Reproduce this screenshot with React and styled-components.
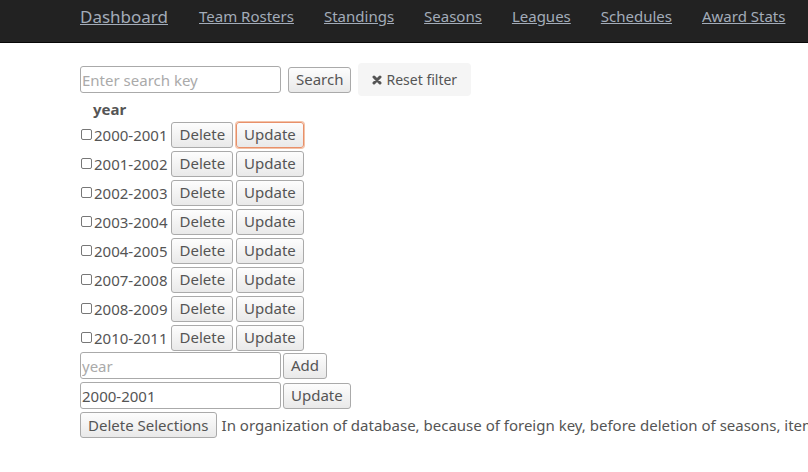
import React from 'react';
import styled, { createGlobalStyle } from 'styled-components';

const GlobalStyle = createGlobalStyle`
  body {
    margin: 0;
    background: #fff;
    font-family: "Noto Sans", "Open Sans", sans-serif;
    color: #555;
    overflow: hidden;
  }
`;

const NavBar = styled.div`
  height: 42px;
  background: #222;
  border-bottom: 1px solid #080808;
  display: flex;
  align-items: center;
  padding-left: 80px;
  gap: 30px;
`;

const NavLink = styled.a`
  color: #a3acb9;
  text-decoration: underline;
  font-size: ${(p) => (p.$brand ? '17px' : '15px')};
  margin-top: -10px;
  margin-right: ${(p) => (p.$brand ? '1px' : '0')};
  white-space: nowrap;
`;

const Page = styled.div`
  padding: 20px 0 0 80px;
  white-space: nowrap;
`;

const SearchBar = styled.div`
  display: flex;
  align-items: center;
  gap: 7px;
`;

const TextInput = styled.input`
  width: 201px;
  height: 27px;
  box-sizing: border-box;
  border: 1px solid #aaa;
  border-radius: 3px;
  padding: 0 1px;
  font-family: inherit;
  font-size: 15px;
  color: #555;
  &::placeholder { color: #aaa; }
`;

const Button = styled.button`
  height: 26px;
  box-sizing: border-box;
  padding: 0 7px;
  border: 1px solid ${(p) => (p.$focus ? '#e8906a' : '#aaa')};
  box-shadow: ${(p) => (p.$focus ? '0 0 0 1px #f3c3a8' : 'none')};
  border-radius: 3px;
  background: linear-gradient(#fdfdfd, #e9e9e9);
  font-family: inherit;
  font-size: 15px;
  color: #555;
  line-height: 1;
`;

const ResetButton = styled.button`
  height: 33px;
  padding: 0 14px;
  border: none;
  border-radius: 4px;
  background: #f5f5f5;
  font-family: inherit;
  font-size: 14px;
  color: #555;
  display: flex;
  align-items: center;
  gap: 4px;
`;

const Heading = styled.div`
  font-weight: bold;
  font-size: 15px;
  padding-left: 13px;
  height: 22px;
  line-height: 22px;
  margin-top: 2px;
`;

const Row = styled.div`
  display: flex;
  align-items: center;
  height: 29px;
  gap: 3px;
`;

const Check = styled.input`
  appearance: none;
  width: 11px;
  height: 11px;
  margin: 0 -1px 0 1px;
  border: 1px solid #777;
  border-radius: 2px;
  background: #fff;
  box-sizing: border-box;
`;

const Year = styled.span`
  font-size: 15px;
  margin-right: 1px;
`;

const FormRow = styled.div`
  display: flex;
  align-items: center;
  gap: 2px;
  margin-top: ${(p) => p.$top ?? 3}px;
`;

const Note = styled.span`
  font-size: 15px;
  margin-left: 3px;
`;

const years = ['2000-2001', '2001-2002', '2002-2003', '2003-2004', '2004-2005', '2007-2008', '2008-2009', '2010-2011'];

export default function App() {
  return (
    <>
      <GlobalStyle />
      <NavBar>
        <NavLink $brand>Dashboard</NavLink>
        <NavLink>Team Rosters</NavLink>
        <NavLink>Standings</NavLink>
        <NavLink>Seasons</NavLink>
        <NavLink>Leagues</NavLink>
        <NavLink>Schedules</NavLink>
        <NavLink>Award Stats</NavLink>
      </NavBar>
      <Page>
        <SearchBar>
          <TextInput placeholder="Enter search key" />
          <Button>Search</Button>
          <ResetButton>
            <svg width="10" height="10" viewBox="0 0 10 10">
              <path d="M2 2 L8 8 M8 2 L2 8" stroke="#555" strokeWidth="3" strokeLinecap="round" />
            </svg>
            Reset filter
          </ResetButton>
        </SearchBar>
        <Heading>year</Heading>
        {years.map((y, i) => (
          <Row key={y}>
            <Check type="checkbox" />
            <Year>{y}</Year>
            <Button>Delete</Button>
            <Button $focus={i === 0}>Update</Button>
          </Row>
        ))}
        <FormRow $top={0}>
          <TextInput placeholder="year" />
          <Button>Add</Button>
        </FormRow>
        <FormRow>
          <TextInput defaultValue="2000-2001" />
          <Button>Update</Button>
        </FormRow>
        <FormRow>
          <Button>Delete Selections</Button>
          <Note>In organization of database, because of foreign key, before deletion of seasons, items in other tables that reference the seasons must be deleted first.</Note>
        </FormRow>
      </Page>
    </>
  );
}
